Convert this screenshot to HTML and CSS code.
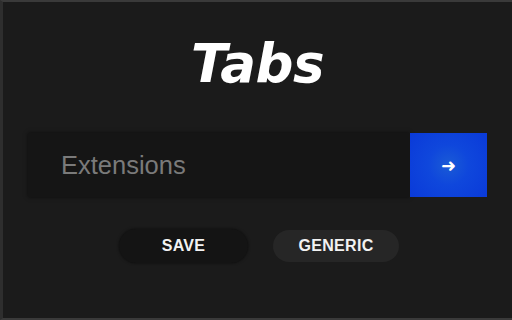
FILE: index.html
```html
<!DOCTYPE html>
<html>
<head>
<meta charset="utf-8">
<link rel="stylesheet" href="styles.css">
</head>
<body>
<div class="frame">
  <h1 class="title">Tabs</h1>
  <div class="search">
    <div class="field">Extensions</div>
    <div class="go"><span class="arrow">➜</span></div>
  </div>
  <div class="actions">
    <div class="pill pill-dark">SAVE</div>
    <div class="pill pill-light">GENERIC</div>
  </div>
</div>
</body>
</html>
```
FILE: styles.css
```css
html, body {
  margin: 0;
  padding: 0;
  width: 512px;
  height: 320px;
  background: #1b1b1b;
  overflow: hidden;
}
.frame {
  box-sizing: border-box;
  width: 512px;
  height: 320px;
  border-top: 2px solid #3a3a3a;
  border-left: 3px solid #2e2e2e;
  border-bottom: 2px solid #3a3a3a;
  display: flex;
  flex-direction: column;
  align-items: center;
  font-family: "Liberation Sans", Arial, sans-serif;
}
.title {
  margin: 30px 0 0 0;
  font-family: "DejaVu Sans", "Liberation Sans", sans-serif;
  font-size: 53px;
  line-height: 64px;
  font-weight: 700;
  font-style: italic;
  color: #ffffff;
  letter-spacing: -0.5px;
  height: 64px;
}
.search {
  margin-top: 37px;
  display: flex;
  height: 64px;
  width: 459px;
}
.field {
  flex: 1;
  background: #151515;
  box-shadow: 0 0 4px rgba(0,0,0,0.6);
  color: #7a7a7a;
  font-size: 25.5px;
  display: flex;
  align-items: center;
  padding-left: 33px;
}
.go {
  width: 77px;
  background: radial-gradient(circle at 50% 50%, #1a5bd6 0%, #0f47dc 40%, #0a3ad9 100%);
  display: flex;
  align-items: center;
  justify-content: center;
}
.arrow {
  color: #ffffff;
  font-family: "DejaVu Sans", sans-serif;
  font-size: 18px;
  font-weight: 700;
}
.actions {
  margin-top: 32px;
  display: flex;
  gap: 25px;
  margin-left: 3px;
}
.pill {
  height: 34px;
  border-radius: 17px;
  display: flex;
  align-items: center;
  justify-content: center;
  font-size: 16px;
  font-weight: 700;
  color: #f2f2f2;
  letter-spacing: 0.3px;
}
.pill-dark {
  width: 129px;
  background: #141414;
  box-shadow: 0 0 3px rgba(0,0,0,0.6);
}
.pill-light {
  width: 126px;
  height: 32px;
  margin-top: 1px;
  background: #262626;
}
```
